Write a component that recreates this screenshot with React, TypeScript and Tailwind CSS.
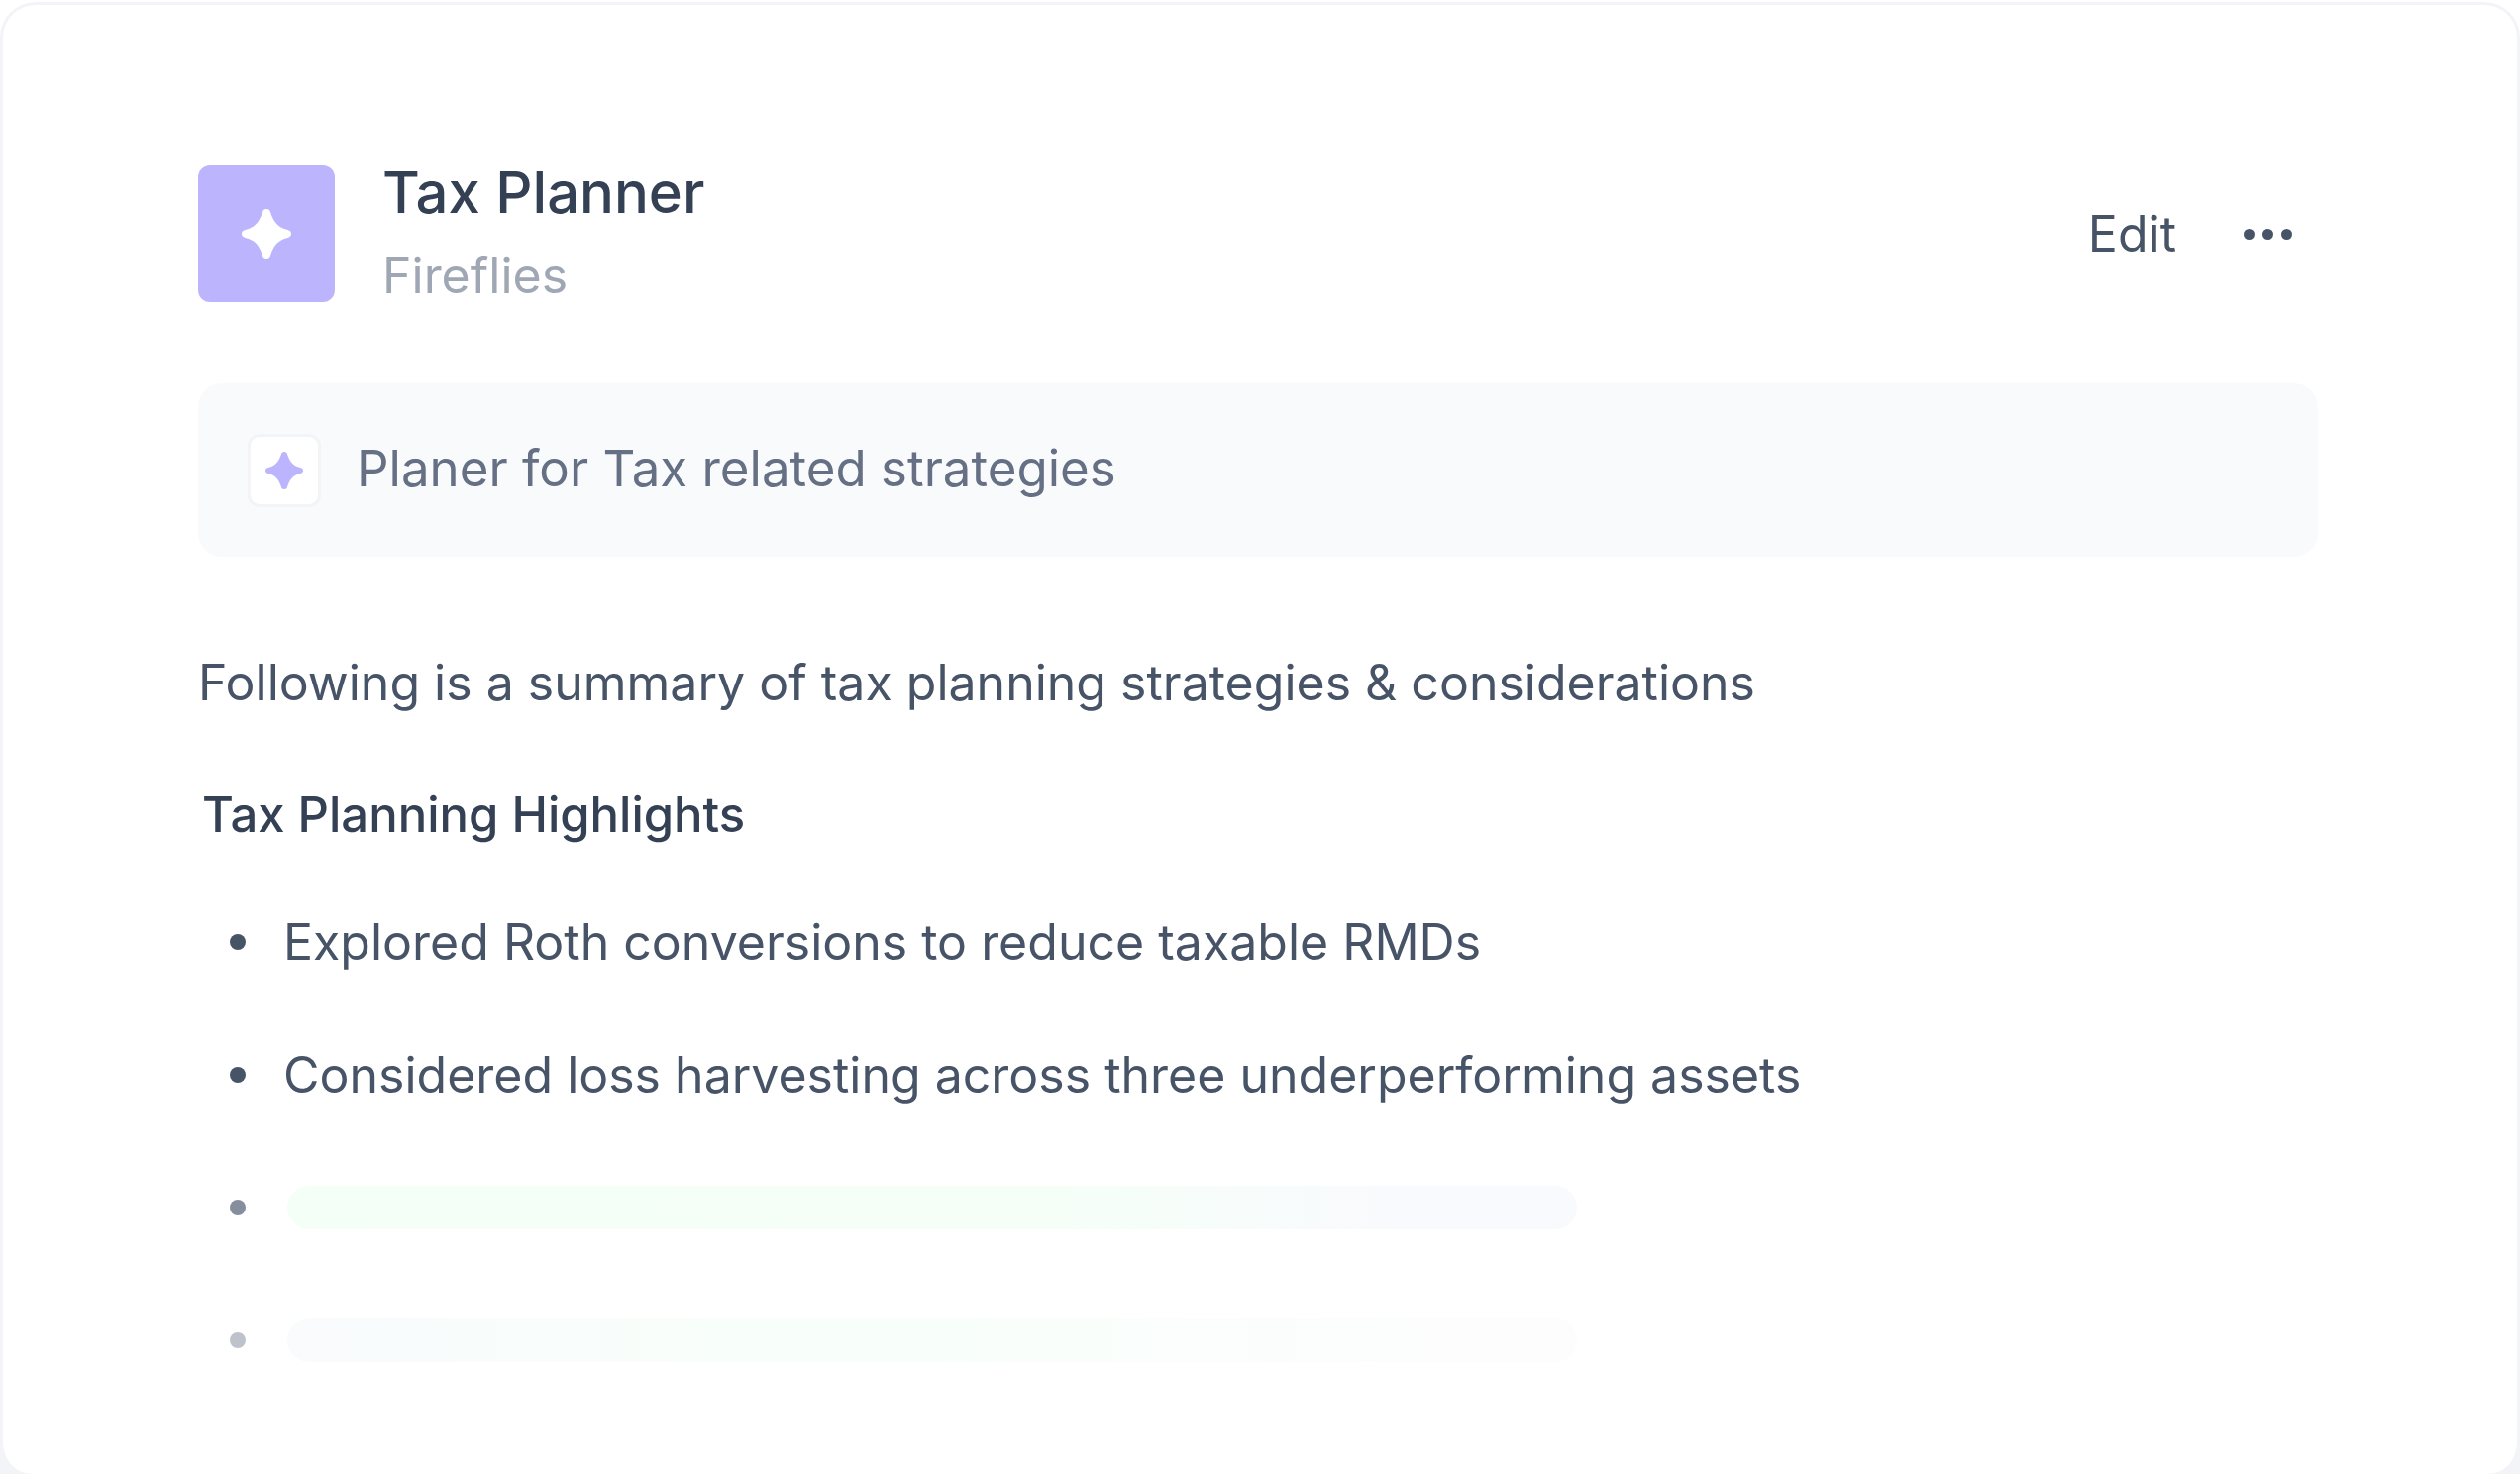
const Star = ({ className }: { className: string }) => (
  <svg viewBox="0 0 50 50" className={className} fill="currentColor" aria-hidden="true">
    <path d="M25 0C27.300 0 28.500 1.200 29 3C31 9.500 34.500 17 43 20L46.500 21C49 21.700 50 23.300 50 25C50 26.700 49 28.300 46.500 29L43 30C34.500 33 31 40.500 29 47C28.500 48.800 27.300 50 25 50C22.700 50 21.500 48.800 21 47C19 40.500 15.500 33 7 30L3.500 29C1 28.300 0 26.700 0 25C0 23.300 1 21.700 3.500 21L7 20C15.500 17 19 9.500 21 3C21.500 1.200 22.700 0 25 0Z" />
  </svg>
);

const items = [
  "Explored Roth conversions to reduce taxable RMDs",
  "Considered loss harvesting across three underperforming assets",
];

const placeholders = [
  { dot: "bg-[#858e9d]", bar: "from-[#f4fff7] via-[#f5fff8] via-60% to-[#f9fafd] to-85%" },
  { dot: "bg-[#bdc2cb]", bar: "from-[#f9fbfc] via-[#f8fffa] via-45% to-[#fdfdfe] to-90%" },
];

export default function App() {
  return (
    <div className="flex min-h-screen bg-linear-to-b from-white from-50% to-[#f2f4f8] to-50% pt-0.5">
      <main className="flex-1 rounded-t-[36px] rounded-b-[32px] border-x-[3px] border-t-[3px] border-[#f2f4f8] bg-white pl-[197px] pr-[201px] pt-[157px] font-['Inter',sans-serif] text-[50px] leading-[64px] text-[#475467]">
        <header className="flex items-center justify-between pr-[26px]">
          <div className="flex items-center gap-12">
            <div className="flex size-[138px] items-center justify-center rounded-xl bg-[#bdb4fe] text-white">
              <Star className="size-[50px]" />
            </div>
            <div>
              <h1 className="text-[58px] font-medium text-[#344054]">Tax Planner</h1>
              <p className="mt-5 text-[#a0a7b4]">Fireflies</p>
            </div>
          </div>
          <div className="flex items-center gap-[68px]">
            <button>Edit</button>
            <button aria-label="More options" className="flex gap-2">
              <span className="size-[11px] rounded-full bg-[#475467]" />
              <span className="size-[11px] rounded-full bg-[#475467]" />
              <span className="size-[11px] rounded-full bg-[#475467]" />
            </button>
          </div>
        </header>
        <section className="mt-[77px] flex h-[175px] items-center gap-9 rounded-3xl bg-[#f9fafc] px-[50px] text-[#667085]">
          <span className="flex size-[74px] items-center justify-center rounded-xl border-[3px] border-[#f3f4f8] bg-white text-[#bdb4fe]">
            <Star className="size-[38px]" />
          </span>
          <p className="pb-1 text-[51px]">Planer for Tax related strategies</p>
        </section>
        <p className="mt-[95px]">Following is a summary of tax planning strategies &amp; considerations</p>
        <h2 className="mt-[70px] pl-1 text-[49px] font-medium text-[#344054]">Tax Planning Highlights</h2>
        <ul className="mt-16 flex flex-col gap-[70px] pl-8">
          {items.map((text) => (
            <li key={text} className="flex items-center gap-[38px]">
              <span className="size-4 shrink-0 rounded-full bg-[#475467]" />
              {text}
            </li>
          ))}
          {placeholders.map(({ dot, bar }) => (
            <li key={dot} className="flex h-16 items-center gap-[42px]" aria-hidden="true">
              <span className={`size-4 shrink-0 rounded-full ${dot}`} />
              <span className={`h-11 w-full max-w-[1302px] rounded-full bg-linear-to-r ${bar}`} />
            </li>
          ))}
        </ul>
      </main>
    </div>
  );
}
